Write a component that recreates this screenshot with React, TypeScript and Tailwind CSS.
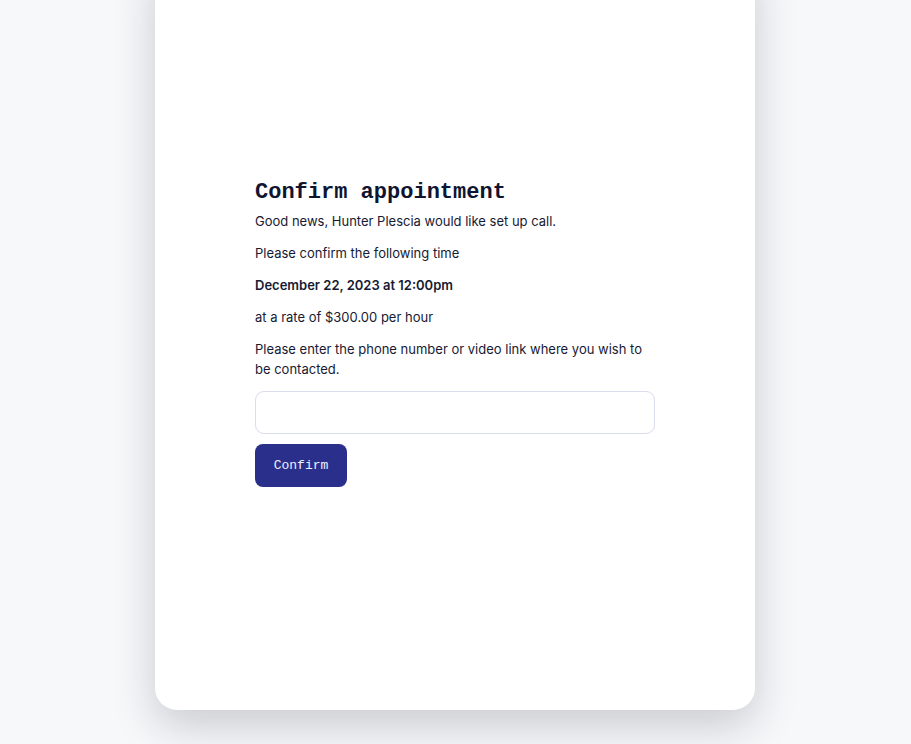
export default function App() {
  return (
    <div className="min-h-[744px] w-full overflow-hidden bg-[#f7f8fa] flex justify-center">
      {/* Card */}
      <div className="mt-[-44px] mb-[34px] mr-[1px] h-[754px] w-[600px] rounded-[22px] bg-white shadow-[0_16px_44px_rgba(15,23,42,0.2)] flex items-center px-[100px]">
        <div className="w-[400px] font-['Inter','Noto_Sans',sans-serif] text-[13px] leading-[20px] text-[#161a33]">
          <h1 className="font-['Liberation_Mono',monospace] text-[22px] font-bold leading-[28px] text-[#0f1531] mb-[4px]">
            Confirm appointment
          </h1>
          <p className="mb-3">Good news, Hunter Plescia would like set up call.</p>
          <p className="mb-3">Please confirm the following time</p>
          <p className="mb-3 font-semibold">December 22, 2023 at 12:00pm</p>
          <p className="mb-3">at a rate of $300.00 per hour</p>
          <p className="mb-3">Please enter the phone number or video link where you wish to be contacted.</p>
          <input
            type="text"
            className="block w-full h-[43px] rounded-[9px] border border-[#d9ddec] bg-white px-3 outline-none"
          />
          <button className="mt-[10px] h-[43px] w-[92px] rounded-[8px] bg-[#2b2f8c] font-['Liberation_Mono',monospace] text-[13px] text-[#eef0ff]">
            Confirm
          </button>
        </div>
      </div>
    </div>
  );
}
